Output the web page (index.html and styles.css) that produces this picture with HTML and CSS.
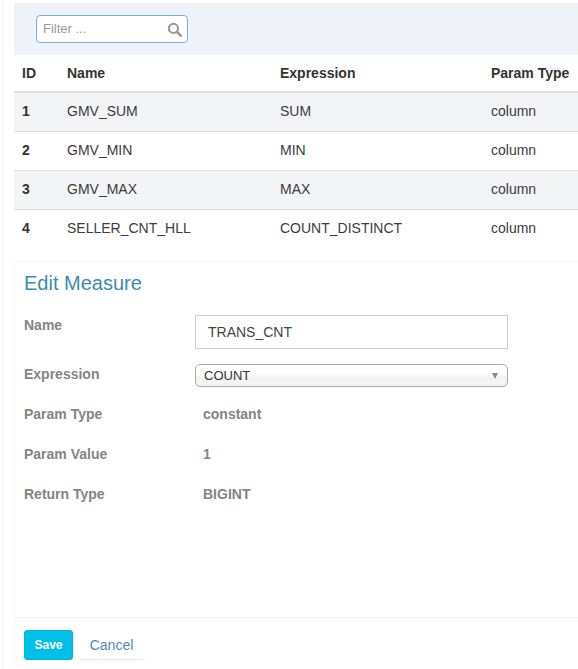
FILE: index.html
```html
<!DOCTYPE html>
<html lang="en">
<head>
  <meta charset="UTF-8" />
  <title>Edit Measure</title>
  <link rel="stylesheet" href="styles.css">
</head>
<body>
  <main class="content">
    <div class="toolbar">
      <div class="filter">
        <span class="filter-text">Filter ...</span>
        <svg class="filter-icon" width="15" height="15" viewBox="0 0 16 16">
          <circle cx="6.8" cy="6.8" r="4.9" fill="none" stroke="#999" stroke-width="2.2"/>
          <path d="M10.6 10.6 L14.6 14.6" stroke="#999" stroke-width="2.8" stroke-linecap="round"/>
        </svg>
      </div>
    </div>

    <table class="measures">
      <thead>
        <tr>
          <th class="col-id">ID</th>
          <th class="col-name">Name</th>
          <th class="col-expr">Expression</th>
          <th>Param Type</th>
        </tr>
      </thead>
      <tbody>
        <tr><td class="id">1</td><td>GMV_SUM</td><td>SUM</td><td>column</td></tr>
        <tr><td class="id">2</td><td>GMV_MIN</td><td>MIN</td><td>column</td></tr>
        <tr><td class="id">3</td><td>GMV_MAX</td><td>MAX</td><td>column</td></tr>
        <tr><td class="id">4</td><td>SELLER_CNT_HLL</td><td>COUNT_DISTINCT</td><td>column</td></tr>
      </tbody>
    </table>

    <section class="panel">
      <h2 class="panel-title">Edit Measure</h2>
      <div class="fields">
        <div class="field field-name">
          <span class="label">Name</span>
          <div class="text-input">TRANS_CNT</div>
        </div>
        <div class="field field-expr">
          <span class="label">Expression</span>
          <div class="select">COUNT<span class="caret"></span></div>
        </div>
        <div class="field field-static">
          <span class="label">Param Type</span>
          <span class="value">constant</span>
        </div>
        <div class="field field-static">
          <span class="label">Param Value</span>
          <span class="value">1</span>
        </div>
        <div class="field field-static">
          <span class="label">Return Type</span>
          <span class="value">BIGINT</span>
        </div>
      </div>
      <div class="actions">
        <button class="btn-save" type="button">Save</button>
        <button class="btn-cancel" type="button">Cancel</button>
      </div>
    </section>
  </main>
</body>
</html>
```

FILE: styles.css
```css
html, body {
  height: 100%;
}
body {
  margin: 0;
  background-color: #fff;
  font-family: "Liberation Sans", Arial, sans-serif;
  font-size: 14px;
  color: #333;
  overflow: hidden;
}
.content {
  width: 580px;
  margin-left: 3px;
  padding: 3px 0 0 10px;
  border-left: 1px solid #f6f6f6;
  height: 666px;
}
.toolbar {
  height: 52px;
  padding: 12px 0 0 22px;
  box-sizing: border-box;
  background-color: #eff3f8;
}
.filter {
  width: 152px;
  height: 28px;
  box-sizing: border-box;
  display: flex;
  align-items: center;
  justify-content: space-between;
  padding: 0 5px 0 6px;
  background-color: #fff;
  border: 1px solid #6fb3e0;
  border-radius: 4px;
}
.filter-text {
  margin-bottom: 2px;
  font-size: 13px;
  color: #999;
}
.measures {
  width: 100%;
  table-layout: fixed;
  border-collapse: collapse;
}
.measures th, .measures td {
  box-sizing: border-box;
}
.col-id {
  width: 45px;
}
.col-name {
  width: 213px;
}
.col-expr {
  width: 211px;
}
.measures th {
  height: 37px;
  padding: 0 8px;
  text-align: left;
  font-weight: bold;
  color: #333;
  border-bottom: 2px solid #ddd;
}
.measures td {
  height: 39px;
  padding: 0 8px 2px;
  color: #3c3c3c;
  border-top: 1px solid #ddd;
}
.measures tbody tr:first-child td {
  border-top: 0;
}
.measures tbody tr:nth-child(odd) {
  background-color: #f3f4f6;
}
.measures td.id {
  font-weight: bold;
  color: #333;
}
.panel {
  margin-top: 13px;
  height: 406px;
  display: flex;
  flex-direction: column;
  border-top: 1px solid #f8f8f8;
  border-left: 1px solid #f8f8f8;
  border-radius: 4px 0 0 0;
  box-sizing: border-box;
}
.panel-title {
  margin: 0;
  padding: 10px 0 0 9px;
  font-size: 20px;
  line-height: 22px;
  font-weight: normal;
  color: #3b8cb0;
}
.fields {
  flex: 1;
  padding: 21px 0 0 9px;
}
.field {
  display: flex;
  align-items: flex-start;
}
.label {
  width: 171px;
  flex: none;
  font-weight: bold;
  color: #848484;
}
.field-name {
  height: 49px;
}
.field-name .label {
  line-height: 20px;
}
.text-input {
  width: 313px;
  height: 34px;
  box-sizing: border-box;
  padding-left: 12px;
  line-height: 32px;
  color: #444;
  border: 1px solid #ccc;
}
.field-expr {
  height: 40px;
}
.field-expr .label {
  line-height: 21px;
}
.select {
  width: 313px;
  height: 23px;
  box-sizing: border-box;
  display: flex;
  align-items: center;
  justify-content: space-between;
  padding: 0 9px 0 8px;
  font-size: 13px;
  color: #333;
  background: linear-gradient(#fff 40%, #f1f1f1 60%, #f5f5f5);
  border: 1px solid #aaa;
  border-radius: 5px;
}
.caret {
  width: 0;
  height: 0;
  border-left: 3.5px solid transparent;
  border-right: 3.5px solid transparent;
  border-top: 6px solid #888;
}
.field-static {
  height: 40px;
  line-height: 20px;
}
.value {
  padding-left: 8px;
  font-weight: bold;
  color: #848484;
}
.actions {
  display: flex;
  align-items: flex-start;
  gap: 5px;
  height: 50px;
  box-sizing: border-box;
  padding: 12px 0 0 9px;
  border-top: 1px solid #efefef;
}
.actions button {
  font-family: inherit;
  height: 30px;
  padding: 0;
  cursor: pointer;
}
.btn-save {
  width: 49px;
  font-size: 12px;
  font-weight: bold;
  color: #fff;
  background-color: #00bfe8;
  border: 1px solid #00b4dc;
  border-radius: 3px;
}
.btn-cancel {
  width: 67px;
  font-size: 14px;
  color: #4d87c7;
  background-color: #fff;
  border: 0;
  border-bottom: 1px solid #e5e5e5;
  border-radius: 0 0 3px 3px;
}
```
